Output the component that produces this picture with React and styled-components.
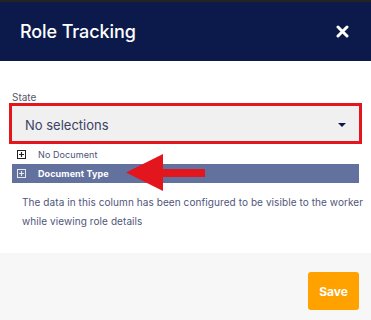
import React from 'react';
import styled, { createGlobalStyle } from 'styled-components';

const GlobalStyle = createGlobalStyle`
  html, body {
    margin: 0;
    padding: 0;
    background: #ffffff;
  }
  body {
    font-family: Inter, "Open Sans", sans-serif;
  }
`;

const Modal = styled.div`
  width: 371px;
  height: 320px;
  display: flex;
  flex-direction: column;
  overflow: hidden;
`;

const TopEdge = styled.div`
  height: 2px;
  background: #232323;
`;

const Header = styled.header`
  height: 59px;
  background: #0b1a4b;
  display: flex;
  align-items: center;
  justify-content: space-between;
  padding: 0 22px 0 20px;
`;

const Title = styled.h1`
  margin: 0;
  color: #ffffff;
  font-size: 18px;
  font-weight: 500;
  letter-spacing: -0.1px;
`;

const CloseButton = styled.button`
  border: 0;
  background: none;
  padding: 0;
  width: 14px;
  height: 14px;
  display: flex;
  align-items: center;
  justify-content: center;
  cursor: pointer;
`;

const Body = styled.section`
  position: relative;
  height: 192px;
  background: #ffffff;
  padding: 30px 12px 0;
  box-sizing: border-box;
`;

const Label = styled.label`
  display: block;
  font-size: 10px;
  line-height: 12px;
  color: #55586b;
  margin-bottom: 3px;
`;

const Select = styled.div`
  height: 35px;
  background: #f0f0f0;
  outline: 3px solid #e3161d;
  display: flex;
  align-items: center;
  justify-content: space-between;
  padding: 2px 13px 0;
  box-sizing: border-box;
  font-size: 13px;
  color: #3b4263;
`;

const Caret = styled.span`
  width: 0;
  height: 0;
  border-left: 4px solid transparent;
  border-right: 4px solid transparent;
  border-top: 4px solid #0b1a4b;
`;

const Tree = styled.ul`
  list-style: none;
  margin: 4px 0 0;
  padding: 0;
`;

const Row = styled.li`
  height: 19px;
  display: flex;
  align-items: center;
  gap: 12px;
  padding-left: 5px;
  font-size: 9px;
  letter-spacing: 0.1px;
  background: ${p => (p.$active ? '#63719f' : 'transparent')};
  color: ${p => (p.$active ? '#ffffff' : '#4b5275')};
  font-weight: ${p => (p.$active ? 700 : 400)};
`;

const Note = styled.p`
  margin: 10px -12px 0 0;
  padding-left: 10px;
  font-size: 10px;
  letter-spacing: 0.08px;
  line-height: 19px;
  color: #50557a;
`;

const Arrow = styled.svg`
  position: absolute;
  left: 120px;
  top: 89px;
`;

const Footer = styled.footer`
  flex: 1;
  background: #f7f7f7;
  display: flex;
  justify-content: flex-end;
  align-items: flex-start;
  padding: 19px 12px 0;
`;

const SaveButton = styled.button`
  width: 51px;
  height: 38px;
  border: 0;
  border-radius: 3px;
  background: #ffa200;
  color: #ffffff;
  font-family: Inter, sans-serif;
  font-size: 12px;
  font-weight: 700;
  cursor: pointer;
`;

const PlusBox = ({ light }) => (
  <svg width="9" height="9" viewBox="0 0 9 9">
    <rect x="0.5" y="0.5" width="8" height="8" fill="none" stroke={light ? '#e6e8f0' : '#222'} strokeWidth="1" />
    <path d="M4.5 2v5M2 4.5h5" stroke={light ? '#e6e8f0' : '#222'} strokeWidth="1.2" />
  </svg>
);

export default function App() {
  return (
    <Modal>
      <GlobalStyle />
      <TopEdge />
      <Header>
        <Title>Role Tracking</Title>
        <CloseButton aria-label="Close">
          <svg width="13" height="13" viewBox="0 0 13 13">
            <path d="M2 2l9 9M11 2l-9 9" stroke="#ffffff" strokeWidth="3" strokeLinecap="round" />
          </svg>
        </CloseButton>
      </Header>
      <Body>
        <Label>State</Label>
        <Select>
          <span>No selections</span>
          <Caret />
        </Select>
        <Tree>
          <Row>
            <PlusBox />
            No Document
          </Row>
          <Row $active>
            <PlusBox light />
            Document Type
          </Row>
        </Tree>
        <Note>
          The data in this column has been configured to be visible to the worker while viewing role details
        </Note>
        <Arrow width="90" height="45" viewBox="0 0 90 45">
          <polygon points="6,22.5 43,4 43,19 85,19 85,27 43,27 43,41" fill="#e3161d" />
        </Arrow>
      </Body>
      <Footer>
        <SaveButton>Save</SaveButton>
      </Footer>
    </Modal>
  );
}
